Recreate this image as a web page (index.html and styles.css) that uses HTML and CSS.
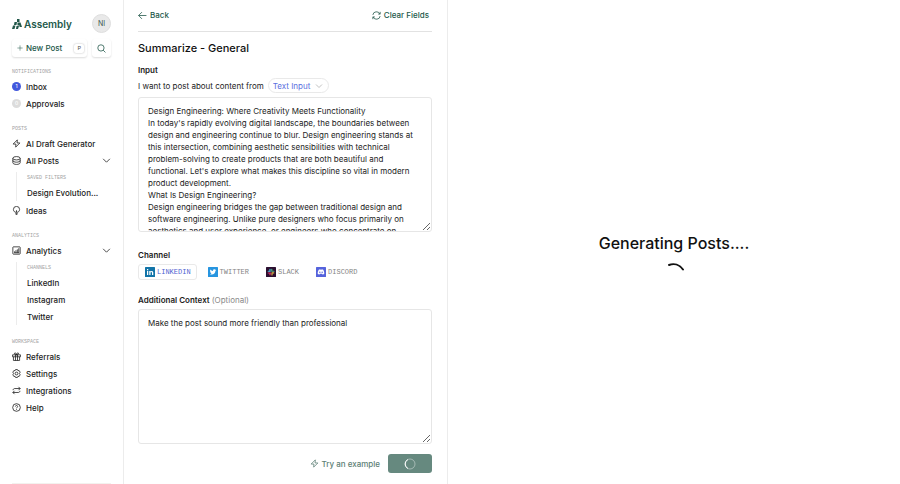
FILE: index.html
```html
<!DOCTYPE html>
<html lang="en">

<head>
  <meta charset="UTF-8" />
  <meta name="viewport" content="width=device-width, initial-scale=1.0" />
  <title>Assembly - Summarize</title>
  <link rel="stylesheet" href="styles.css">
</head>

<body>
  <div class="app">
    <aside class="sidebar">
      <div class="brand">
        <a class="logo" href="#">
          <svg viewBox="0 0 20 20" width="10" height="10" fill="currentColor">
            <path d="M10 0h5v6h-5zM5 6h5l-1 6H4zM2 13h5l-2 7H0zM11 7h4v6h-4zM15 7h2l3 9h-5zM9 14h5l-2 6H8z" />
          </svg>
          <span>Assembly</span>
        </a>
        <button class="avatar">NI</button>
      </div>

      <div class="actions">
        <button class="new-post">
          <svg class="icon" viewBox="0 0 16 16"><path d="M8 1v14M1 8h14" /></svg>
          <span>New Post</span>
          <kbd>P</kbd>
        </button>
        <button class="search" aria-label="Search">
          <svg class="icon" viewBox="0 0 16 16"><circle cx="7" cy="7" r="5.6" /><path d="M11 11l4 4" /></svg>
        </button>
      </div>

      <nav>
        <section class="group">
          <h2>NOTIFICATIONS</h2>
          <a href="#"><span class="count active">1</span>Inbox</a>
          <a href="#"><span class="count">0</span>Approvals</a>
        </section>

        <section class="group">
          <h2>POSTS</h2>
          <a href="#">
            <svg class="icon" viewBox="0 0 16 16"><path d="M9.500 1.500L2 9h5l-.5 5.500L14 7H9z" /></svg>
            AI Draft Generator
          </a>
          <a href="#">
            <svg class="icon" viewBox="0 0 16 16"><ellipse cx="8" cy="4" rx="6.500" ry="3" /><path d="M1.500 4v8c0 1.600 3 3 6.500 3s6.500-1.400 6.500-3V4M1.500 8c0 1.600 3 3 6.500 3s6.500-1.400 6.500-3" /></svg>
            All Posts
            <svg class="icon chevron" viewBox="0 0 16 16"><path d="M2 5l6 6 6-6" /></svg>
          </a>
          <div class="sub">
            <h3>SAVED FILTERS</h3>
            <a href="#">Design Evolution...</a>
          </div>
          <a href="#">
            <svg class="icon" viewBox="0 0 16 16"><path d="M5.500 11C3.500 10 2.500 8 2.500 6.200a5.500 5.500 0 0 1 11 0C13.500 8 12.500 10 10.500 11zM6 13.200h4M6.500 15.200h3M8 11V7.500" /></svg>
            Ideas
          </a>
        </section>

        <section class="group">
          <h2>ANALYTICS</h2>
          <a href="#">
            <svg class="icon" viewBox="0 0 16 16"><rect x="1.500" y="1.500" width="13" height="13" rx="1" /><path d="M4.500 12V9.500M7 12V7.500M9.500 12V6M12 12V4M4 12h8.500" /></svg>
            Analytics
            <svg class="icon chevron" viewBox="0 0 16 16"><path d="M2 5l6 6 6-6" /></svg>
          </a>
          <div class="sub">
            <h3>CHANNELS</h3>
            <a href="#">LinkedIn</a>
            <a href="#">Instagram</a>
            <a href="#">Twitter</a>
          </div>
        </section>

        <section class="group">
          <h2>WORKSPACE</h2>
          <a href="#">
            <svg class="icon" viewBox="0 0 16 16"><path d="M1 5h14v3.500H1zM2.500 8.500V15h11V8.500M6.200 5v10M9.800 5v10M8 5C4 5 3.500 1.500 5.500 1.500S8 5 8 5s.5-3.500 2.500-3.500S12 5 8 5" /></svg>
            Referrals
          </a>
          <a href="#">
            <svg class="icon" viewBox="0 0 16 16"><path d="M6.300 1h3.400l.8 2 2.200-.2 1.800 2.900L13.200 8l1.300 2.300-1.800 2.900-2.200-.2-.8 2H6.300l-.8-2-2.200.2-1.800-2.900L2.800 8 1.500 5.700l1.800-2.900 2.200.2z" /><circle cx="8" cy="8" r="2.500" /></svg>
            Settings
          </a>
          <a href="#">
            <svg class="icon" viewBox="0 0 16 16"><path d="M11.500 1.500L14.500 4.500l-3 3M14.500 4.500H5c-2 0-3 1-3 3M4.500 8.500l-3 3 3 3M1.500 11.500H11c2 0 3-1 3-3" /></svg>
            Integrations
          </a>
          <a href="#">
            <svg class="icon" viewBox="0 0 16 16"><circle cx="8" cy="8" r="6.800" /><path d="M6 6.300c0-2.600 4-2.600 4 0C10 7.700 8 7.800 8 9.500M8 11v1.300" /></svg>
            Help
          </a>
        </section>
      </nav>
      <div class="sidebar-end"></div>
    </aside>

    <main class="composer">
      <header class="toolbar">
        <button class="link">
          <svg class="icon" viewBox="0 0 16 16"><path d="M15 8H1M7 2L1 8l6 6" /></svg>
          Back
        </button>
        <button class="link">
          <svg class="icon" viewBox="0 0 16 16"><path d="M1.500 7A6.500 6.500 0 0 1 14 5.500M14.500 1.500v4H11M14.500 9A6.500 6.500 0 0 1 2 10.500M1.500 14.500v-4H5" /></svg>
          Clear Fields
        </button>
      </header>

      <h1>Summarize - General</h1>

      <form>
        <label class="label" for="content">Input</label>
        <div class="source">
          <label for="source">I want to post about content from</label>
          <span class="select">
            <select id="source">
              <option>Text Input</option>
            </select>
            <svg class="icon" viewBox="0 0 16 16"><path d="M2 5l6 6 6-6" /></svg>
          </span>
        </div>
        <textarea id="content">Design Engineering: Where Creativity Meets Functionality
In today's rapidly evolving digital landscape, the boundaries between design and engineering continue to blur. Design engineering stands at this intersection, combining aesthetic sensibilities with technical problem-solving to create products that are both beautiful and functional. Let's explore what makes this discipline so vital in modern product development.
What Is Design Engineering?
Design engineering bridges the gap between traditional design and software engineering. Unlike pure designers who focus primarily on aesthetics and user experience, or engineers who concentrate on</textarea>

        <fieldset>
          <legend class="label">Channel</legend>
          <div class="channels">
            <label class="channel">
              <input type="radio" name="channel" checked>
              <svg viewBox="0 0 20 20"><rect width="20" height="20" rx="1" fill="#1274a8" /><path d="M4 8h2.500v8H4zM4 4h2.500v2.500H4zM8.500 8H11v1.200c1.500-2.200 5.500-1.700 5.500 2V16H14v-4.500c0-2-3-2-3 0V16H8.500z" fill="#fff" /></svg>
              LINKEDIN
            </label>
            <label class="channel">
              <input type="radio" name="channel">
              <svg viewBox="0 0 20 20"><rect width="20" height="20" rx="1" fill="#2795e0" /><path d="M16.500 6l-1.600 1.500c0 5.500-5.500 9.500-11.400 6.500 1.500 0 2.700-.4 3.500-1.100-1.200-.2-2-.8-2.400-1.800h1.100C4.500 10.500 4 9.500 4 8.300l1.100.3C4 7.500 3.900 6 4.500 5c1.500 1.700 3.300 2.600 5.500 2.800-.4-3 2.600-4.200 4.200-2.500l1.800-.6-1 1.400z" fill="#fff" /></svg>
              TWITTER
            </label>
            <label class="channel">
              <input type="radio" name="channel">
              <svg viewBox="0 0 20 20"><rect width="20" height="20" rx="1" fill="#2b0f30" /><g stroke-width="2.400" stroke-linecap="round"><path d="M8 4.500v4.500M4.500 8.500h3" stroke="#50b9e0" /><path d="M11.500 8.500h4.500M11.500 4.500v3" stroke="#4fae85" /><path d="M12 11.500v4.500M12.500 11.800h3" stroke="#e0ad45" /><path d="M4.500 12h4.500M8 12.500v3" stroke="#e0346a" /></g></svg>
              SLACK
            </label>
            <label class="channel">
              <input type="radio" name="channel">
              <svg viewBox="0 0 20 20"><rect width="20" height="20" rx="1" fill="#5563dc" /><path d="M5.500 5.500l3-1 .5 1h2l.5-1 3 1c1.500 2.500 2.300 5 2 8l-3 1.800-1-1.600h-5l-1 1.600-3-1.800c-.3-3 .5-5.500 2-8z" fill="#fff" /><circle cx="7.700" cy="10.500" r="1.400" fill="#5563dc" /><circle cx="12.300" cy="10.500" r="1.400" fill="#5563dc" /></svg>
              DISCORD
            </label>
          </div>
        </fieldset>

        <label class="label" for="context">Additional Context <span>(Optional)</span></label>
        <textarea id="context">Make the post sound more friendly than professional</textarea>

        <div class="form-actions">
          <button type="button" class="link example">
            <svg class="icon" viewBox="0 0 16 16"><path d="M9.500 1.500L2 9h5l-.5 5.500L14 7H9z" /></svg>
            Try an example
          </button>
          <button type="submit" class="submit" aria-label="Generate">
            <svg viewBox="0 0 24 24"><circle cx="12" cy="12" r="10" stroke-opacity="0.4" /><path d="M8 21A10 10 0 0 1 8 3" /></svg>
          </button>
        </div>
      </form>
    </main>

    <section class="result">
      <p>Generating Posts....</p>
      <svg class="spinner" viewBox="0 0 24 24"><path d="M7 4C12 2 17.500 3.500 21 8.500" /></svg>
    </section>
  </div>
</body>

</html>
```

FILE: styles.css
```css
* {
  box-sizing: border-box;
}

body {
  margin: 0;
  background: #fff;
  color: #1c1c1c;
  font-family: Inter, "Liberation Sans", sans-serif;
  font-size: 8px;
  line-height: 12px;
}

h1, h2, h3, p {
  margin: 0;
}

a {
  color: inherit;
  text-decoration: none;
}

button {
  padding: 0;
  border: 0;
  background: none;
  color: #23584a;
  font: inherit;
  cursor: pointer;
}

.icon {
  flex: none;
  width: 9px;
  height: 9px;
  fill: none;
  stroke: currentColor;
  stroke-width: 1.4;
}

.app {
  display: flex;
  min-height: 100vh;
}

/* sidebar */
.sidebar {
  display: flex;
  flex-direction: column;
  flex: none;
  width: 124px;
  padding: 14px 12px 0;
  border-right: 1px solid #ececec;
}

.brand {
  display: flex;
  align-items: center;
  justify-content: space-between;
}

.logo {
  display: flex;
  align-items: center;
  gap: 2px;
  color: #23584a;
  font-size: 10px;
  font-weight: 600;
}

.avatar {
  width: 19px;
  height: 19px;
  border: 1px solid #dedede;
  border-radius: 50%;
  background: #e9e9e9;
  color: #40564f;
  font-size: 7px;
}

.actions {
  display: flex;
  gap: 5px;
  margin-top: 6px;
}

.new-post,
.search {
  display: flex;
  align-items: center;
  height: 18px;
  border-radius: 3px;
  box-shadow: 0 1px 2px rgba(0, 0, 0, 0.14);
}

.new-post {
  flex: 1;
  gap: 3px;
  padding: 0 3px 0 5px;
  font-weight: 500;
}

.new-post .icon {
  width: 6px;
  height: 6px;
}

.search {
  justify-content: center;
  width: 19px;
}

kbd {
  margin-left: auto;
  padding: 0 3px;
  border-radius: 2px;
  box-shadow: 0 0 2px rgba(0, 0, 0, 0.3);
  color: #555;
  font-family: "Liberation Mono", monospace;
  font-size: 6px;
  line-height: 9px;
}

.group {
  margin-bottom: 9px;
}

nav {
  margin-top: 7px;
}

.group a {
  display: flex;
  align-items: center;
  gap: 5px;
  height: 17px;
  font-weight: 500;
}

.group h2,
.group h3 {
  color: #a3a3a3;
  font-family: "Liberation Mono", monospace;
  font-size: 5px;
  font-weight: 400;
  line-height: 12px;
}

.group h2 {
  padding-top: 2px;
}

.count {
  width: 9px;
  height: 9px;
  border-radius: 50%;
  background: #dcdcdc;
  color: #fff;
  font-size: 5px;
  line-height: 9px;
  text-align: center;
}

.count.active {
  background: #4258dc;
}

.chevron {
  margin-left: auto;
}

.sub {
  margin: 3px 0 1px 4px;
  padding-left: 10px;
  border-left: 1px solid #ececec;
}

.sidebar-end {
  height: 1px;
  margin-top: auto;
  background: #f3f1ee;
}

/* form */
.composer {
  flex: none;
  width: 36%;
  padding: 0 15px 0 14px;
  border-right: 1px solid #ececec;
}

.toolbar {
  display: flex;
  justify-content: space-between;
  padding: 0 3px 1px 0;
  border-bottom: 1px solid #e2e2e2;
}

.link {
  display: flex;
  align-items: center;
  gap: 3px;
  height: 30px;
  font-weight: 500;
}

h1 {
  margin-top: 8px;
  color: #111;
  font-size: 11px;
  font-weight: 500;
  line-height: 16px;
}

.label {
  display: block;
  padding: 0;
  font-weight: 600;
}

.label span {
  color: #8a8a8a;
  font-weight: 400;
}

form > .label:first-child {
  margin-top: 8px;
}

.source {
  display: flex;
  align-items: center;
  gap: 4px;
  margin: 2px 0 4px;
}

.select {
  display: flex;
  align-items: center;
  height: 15px;
  padding: 0 5px 0 4px;
  border: 1px solid #e9e9e9;
  border-radius: 8px;
  color: #5a70e0;
}

.select select {
  padding: 0;
  border: 0;
  background: none;
  color: inherit;
  font: inherit;
  appearance: none;
}

.select .icon {
  width: 8px;
  height: 8px;
  margin-left: 4px;
  stroke: #a8a8a8;
}

textarea {
  display: block;
  width: 100%;
  height: 135px;
  padding: 7px 9px;
  border: 1px solid #e6e6e6;
  border-radius: 3px;
  color: inherit;
  font: inherit;
  overflow: hidden;
  resize: vertical;
}

fieldset {
  margin: 17px 0 14px;
  padding: 0;
  border: 0;
}

.channels {
  display: flex;
  gap: 4px;
  margin-top: 3px;
}

.channel {
  display: flex;
  align-items: center;
  gap: 2px;
  height: 16px;
  padding: 0 5px 0 6px;
  border: 1px solid transparent;
  border-radius: 3px;
  color: #858585;
  font-family: "Liberation Mono", monospace;
  font-size: 7px;
}

.channel:has(input:checked) {
  border-color: #e9e9e9;
  color: #4f62d0;
}

.channel input {
  position: absolute;
  opacity: 0;
}

.channel svg {
  width: 10px;
  height: 10px;
}

#context {
  margin-top: 3px;
}

.form-actions {
  display: flex;
  align-items: center;
  justify-content: flex-end;
  gap: 8px;
  margin-top: 10px;
}

.example {
  height: 19px;
  color: #5d8075;
}

.submit {
  display: flex;
  align-items: center;
  justify-content: center;
  width: 44px;
  height: 19px;
  border-radius: 3px;
  background: #66897f;
}

.submit svg {
  width: 12px;
  height: 12px;
  fill: none;
  stroke: #fff;
  stroke-width: 2;
}

/* result */
.result {
  display: flex;
  flex: 1;
  flex-direction: column;
  align-items: center;
  justify-content: center;
  gap: 6px;
  padding-top: 32px;
}

.result p {
  color: #111;
  font-size: 16px;
  font-weight: 500;
  line-height: 24px;
}

.spinner {
  width: 24px;
  height: 24px;
  fill: none;
  stroke: #111;
  stroke-width: 2;
  stroke-linecap: round;
}
```
